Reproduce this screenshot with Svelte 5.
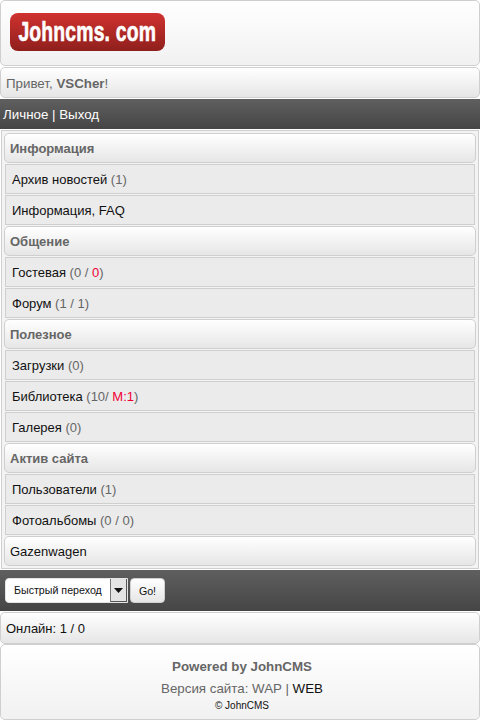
<script lang="ts">
	const rows = [
		{ kind: 'phdr', label: 'Информация' },
		{ kind: 'menu', label: 'Архив новостей', parts: [{ t: ' (1)' }] },
		{ kind: 'menu', label: 'Информация, FAQ', parts: [] },
		{ kind: 'phdr', label: 'Общение' },
		{ kind: 'menu', label: 'Гостевая', parts: [{ t: ' (0 / ' }, { t: '0', red: true }, { t: ')' }] },
		{ kind: 'menu', label: 'Форум', parts: [{ t: ' (1 / 1)' }] },
		{ kind: 'phdr', label: 'Полезное' },
		{ kind: 'menu', label: 'Загрузки', parts: [{ t: ' (0)' }] },
		{ kind: 'menu', label: 'Библиотека', parts: [{ t: ' (10/ ' }, { t: 'M:1', red: true }, { t: ')' }] },
		{ kind: 'menu', label: 'Галерея', parts: [{ t: ' (0)' }] },
		{ kind: 'phdr', label: 'Актив сайта' },
		{ kind: 'menu', label: 'Пользователи', parts: [{ t: ' (1)' }] },
		{ kind: 'menu', label: 'Фотоальбомы', parts: [{ t: ' (0 / 0)' }] },
		{ kind: 'plain', label: 'Gazenwagen' }
	];
</script>

<div class="page">
	<header class="box head">
		<div class="logo"><span class="logo-text">Johncms. com</span></div>
	</header>

	<div class="box hello">Привет, <b>VSCher</b>!</div>

	<nav class="dark tmn">Личное | Выход</nav>

	<main class="content">
		{#each rows as r}
			<div class="row {r.kind}">
				{r.label}{#each r.parts ?? [] as p}<span class:red={p.red} class="cnt">{p.t}</span>{/each}
			</div>
		{/each}
	</main>

	<div class="dark jump">
		<div class="select">
			<span class="sel-text">Быстрый переход</span>
			<span class="sel-arrow"><svg width="9" height="5" viewBox="0 0 9 5"><path d="M0 0h9L4.500 5z" fill="#111" /></svg></span>
		</div>
		<button class="go">Go!</button>
	</div>

	<div class="box online">Онлайн: 1 / 0</div>

	<footer class="box foot">
		<div class="powered">Powered by JohnCMS</div>
		<div class="ver">Версия сайта: WAP | <span class="web">WEB</span></div>
		<div class="copy">© JohnCMS</div>
	</footer>
</div>

<style>
	:global(body) {
		margin: 0;
		background: #fff;
	}
	.page {
		width: 480px;
		height: 720px;
		overflow: hidden;
		font-family: "Liberation Sans", Arial, sans-serif;
		font-size: 13.33px;
		color: #111;
	}
	.box {
		box-sizing: border-box;
		border: 1px solid #cfcfcf;
		border-radius: 5px;
		background: linear-gradient(to bottom, #fff 0%, #e6e6e6 100%);
	}
	.head {
		height: 66px;
		margin-bottom: 1px;
		padding: 12px 0 0 9px;
		background: linear-gradient(to bottom, #fff 0%, #f1f1f1 100%);
	}
	.logo {
		box-sizing: border-box;
		width: 155px;
		height: 38px;
		border-radius: 8px;
		background: linear-gradient(to bottom, #d0322f 0%, #8f1f1c 100%);
		display: flex;
		align-items: center;
		justify-content: center;
	}
	.logo-text {
		display: inline-block;
		font-weight: 700;
		font-size: 22px;
		line-height: 1;
		color: #fff;
		-webkit-text-stroke: 0.5px #fff;
		white-space: nowrap;
		transform: scale(0.88, 1.22);
		letter-spacing: 0.2px;
	}
	.hello {
		height: 31px;
		line-height: 31px;
		padding-left: 5px;
		color: #666;
	}
	.hello b {
		color: #666;
	}
	.dark {
		box-sizing: border-box;
		border-top: 1px solid #fff;
		background: linear-gradient(to bottom, #5f5f5f 0%, #454545 100%);
	}
	.tmn {
		height: 31px;
		line-height: 31px;
		padding-left: 3px;
		color: #fff;
	}
	.content {
		box-sizing: border-box;
		height: 439px;
		margin: 1px 0 0 1px;
		width: 478px;
		padding: 2px 2px 0;
		border: 1px solid #cfcfcf;
		background: #f3f3f3;
		display: flex;
		flex-direction: column;
		gap: 1px;
	}
	.row {
		box-sizing: border-box;
		height: 30px;
		font-size: 13px;
		line-height: 30px;
		border: 1px solid #cfcfcf;
		white-space: pre-wrap;
		flex: none;
	}
	.phdr, .plain {
		border-radius: 5px;
		padding-left: 5px;
		background: linear-gradient(to bottom, #fff 0%, #e6e6e6 100%);
	}
	.phdr {
		font-weight: 700;
		color: #666;
	}
	.menu {
		margin: 0 1px;
		padding-left: 6px;
		background: #ebebeb;
	}
	.cnt {
		color: #666;
	}
	.cnt.red {
		color: #f00033;
	}
	.jump {
		height: 42px;
		padding: 8px 0 0 5px;
		display: flex;
		align-items: flex-start;
		gap: 2px;
	}
	.select {
		box-sizing: border-box;
		width: 123px;
		height: 25px;
		border-radius: 4px 0 0 4px;
		background: #fff;
		border: 1px solid #e5e5e5;
		display: flex;
		align-items: stretch;
		justify-content: space-between;
	}
	.sel-text {
		font-size: 10.67px;
		line-height: 23px;
		padding-left: 8px;
	}
	.sel-arrow {
		box-sizing: border-box;
		width: 17px;
		background: #e4e4e4;
		border-left: 1px solid #777;
		border-right: 1px solid #555;
		border-bottom: 1px solid #555;
		display: flex;
		align-items: center;
		justify-content: center;
	}
	.go {
		box-sizing: border-box;
		width: 35px;
		height: 25px;
		padding: 0;
		border: 1px solid #d0d0d0;
		border-radius: 4px;
		background: linear-gradient(to bottom, #fff 0%, #e6e6e6 100%);
		font-family: inherit;
		font-size: 10.67px;
		color: #111;
	}
	.online {
		height: 32px;
		font-size: 13px;
		line-height: 31px;
		padding-left: 5px;
		margin-top: 1px;
	}
	.foot {
		height: 76px;
		padding: 14px 0 0 4px;
		text-align: center;
		background: linear-gradient(to bottom, #fff 0%, #f1f1f1 100%);
		color: #666;
	}
	.powered {
		font-weight: 700;
		line-height: 16px;
	}
	.ver {
		line-height: 16px;
		margin-top: 6px;
	}
	.web {
		color: #111;
	}
	.copy {
		font-size: 10px;
		line-height: 12px;
		margin-top: 3px;
		color: #111;
	}
</style>
